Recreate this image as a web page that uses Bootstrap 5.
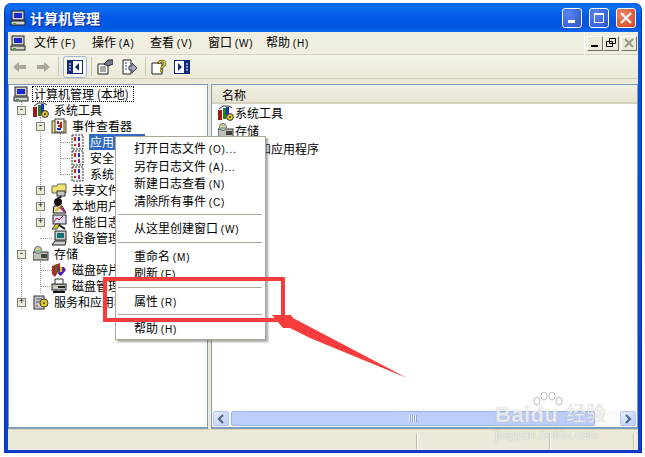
<!DOCTYPE html>
<html lang="zh"><head><meta charset="utf-8"><title>计算机管理</title>
<link href="https://cdn.jsdelivr.net/npm/bootstrap@5.3.0/dist/css/bootstrap.min.css" rel="stylesheet">
<style>
html,body{height:457px;overflow:hidden;background:#fff}
body{font:12px/16px "Noto Sans CJK SC","Liberation Sans",sans-serif;color:#000;position:relative}
.xpwin{margin:3px 0 0 4px;width:638px;height:450px;background:linear-gradient(#0a5ae6,#0053e1 60px,#0b3fd0);border-radius:7px 7px 0 0;padding:0 3px 2px;border:solid #0831b8;border-width:0 1px 1px 1px}
.ttl{height:29px;background:linear-gradient(#0a62e8,#0c6ff0 4px,#0058e8 14px,#0256e0 24px,#0a66ee);margin:0 -3px;padding:0 5px 0 5px;border-radius:7px 7px 0 0;color:#fff;font-size:14px;font-weight:700;line-height:18px;text-shadow:1px 1px #0a2f9e;gap:4px}
.capbtn{width:20px;height:20px;border:1px solid #fff;border-radius:3px;background:radial-gradient(circle at 30% 30%,#5a86ee,#2a52d6);display:flex;align-items:center;justify-content:center;margin-left:3px}
.capbtn.cls{background:radial-gradient(circle at 30% 30%,#e88a6a,#d8401c)}
.cli{background:#ece9d8;height:418px}
.mbar{height:23px;background:#f0eee0;border-bottom:1px solid #d8d4c0;padding-left:2px}
.mitm{margin-left:12px;white-space:nowrap;width:46px}
.mitm.fst{margin-left:8px}
.mitm span,.ctx span{font:10px/16px "Liberation Sans",sans-serif;letter-spacing:.9px}
.mdigrp{border-left:1px solid #fff;height:23px;margin-right:1px;padding-left:2px}
.mdi{width:16px;height:15px;border:1px solid #fff;background:#ece9d8;border-right-color:#716f64;border-bottom-color:#716f64;display:flex;align-items:center;justify-content:center}
.mdi.gap{margin-left:2px}
.tbar{height:24px;background:linear-gradient(#f4f2e8,#ece9d8);border-bottom:1px solid #d0ccb8}
.tsep{width:1px;height:19px;background:#c8c4b0;margin:0 4px}
.tbtn{width:24px;height:22px;display:flex;align-items:center;justify-content:center}
.tbtn.on{border:1px solid #9fb4d0;border-radius:3px;background:#f8f8f2}
.tbtn.w22{width:22px}.tbtn.w18{width:18px}.tbtn.ml3{margin-left:3px}.tbtn.ml5{margin-left:5px}
.panes{height:350px;padding-top:5px}
.lp{width:200px;background:#fff;border:1px solid #7f9db9;border-bottom-width:2px;padding-top:1px;overflow:hidden;position:relative}
.rp{width:427px;margin-left:3px;background:#fff;border:1px solid #7f9db9;border-bottom-width:2px;overflow:hidden}
.rw{height:16px;white-space:nowrap;position:relative;display:flex;align-items:center;z-index:1}
.rw svg{flex:none}
.lv0{padding-left:4px}.lv1{padding-left:6px}.lv2{padding-left:24px}.lv3{padding-left:42px}
.cut{width:106px}
.xp{flex:none;width:9px;height:9px;margin:0 7px 0 2px;border:1px solid #808080;background:#ece9d8;font:9px/7px "Liberation Mono",monospace;text-align:center;color:#000}
.lv2 .xp{margin:0 6px 0 3px}
.slot{flex:0 0 18px}
.vl{position:absolute;border-left:1px dotted #999;width:0}
.vl1{left:12px;top:16px;height:208px}
.vl2{left:31px;top:32px;height:112px}
.vl3{left:51px;top:48px;height:40px}
.vl4{left:31px;top:176px;height:32px}
.hl{position:absolute;border-top:1px dotted #999;height:0;top:8px}
.hl1{left:51px;width:12px}
.hl2{left:31px;width:12px}
.lab{padding:0 1px;line-height:16px;background:#fff;margin-left:4px;overflow:hidden;min-width:0}
.lab.sel{background:#316ac5;color:#fff;flex:0 0 56px}
.lab.foc{outline:1px dotted #000;outline-offset:-1px;margin-left:3px;padding:0 2px;flex:0 0 102px}
.hdr{height:19px;background:linear-gradient(#f2f0e4,#e8e5d4);border-bottom:2px solid #d5d1bc;padding-left:10px;line-height:19px}
.rr{height:18px;padding-left:6px}
.rr .lab{margin-left:0}
.sbar{height:17px;background:#fbfbf8;padding:1px;gap:2px}
.sb{flex:none;width:16px;height:15px;background:linear-gradient(135deg,#e4ebfd,#bccdf8);border:1px solid #b4c6ee;border-radius:2px;display:flex;align-items:center;justify-content:center}
.thm{height:15px;background:#bccdf9;border:1px solid #9db4e8;border-radius:2px;display:flex;align-items:center;justify-content:center}
.trk{flex:0 0 21px}
.grip{width:8px;height:7px;background:repeating-linear-gradient(90deg,#eef3ff 0 1px,#8aa4dc 1px 2px)}
.stat{height:21px;background:#ece9d8;border-top:1px solid #d8d4c0;padding:3px 0 0 409px}
.stat i{display:block;height:16px;border-left:1px solid #fff;box-shadow:-1px 0 #c0bca8}
.st1{width:133px}.st2{width:84px}
.ctx{position:absolute;left:115px;top:136px;width:151px;height:204px;background:#fff;border:1px solid #aca899;box-shadow:2px 2px 2px rgba(80,80,80,.5);padding:3px 2px 0;z-index:3}
.cit{height:17.5px;padding-left:16px;line-height:16px;white-space:nowrap}
.ctx hr{margin:4px 1px 5px 0;border:0;border-top:1px solid #aca899;opacity:1}
.mrk{position:absolute;left:103px;top:277px;width:182px;height:45px;border:4px solid #f63c3c;pointer-events:none;z-index:4}
.arw{position:absolute;left:260px;top:300px;pointer-events:none;z-index:4}
.wm{position:absolute;left:495px;top:392px;width:120px;height:52px;color:rgba(255,255,255,.8);pointer-events:none;white-space:nowrap;text-shadow:0 0 1px rgba(110,110,110,.55);z-index:4}
.wm1{font:700 22px/24px "Liberation Sans",sans-serif;position:absolute;left:0;top:11px;letter-spacing:.4px}
.wm2{font:20px/24px "Noto Sans CJK SC",sans-serif;position:absolute;left:71px;top:9px}
.wm3{font:400 12px/12px "Liberation Sans",sans-serif;letter-spacing:.45px;position:absolute;left:0;top:37px}
.paw{position:absolute;left:36px;top:0}
</style></head><body>
<svg width="0" height="0" class="position-absolute"><defs>
<symbol id="pc" viewBox="0 0 16 16"><rect x="2" y="1" width="12" height="9" fill="#d0d0c8" stroke="#222"/><rect x="4" y="3" width="8" height="5" fill="#1a28c8"/><rect x="1" y="11" width="14" height="4" fill="#d0d0c8" stroke="#222"/><rect x="3" y="13" width="3" height="1" fill="#2a2"/></symbol>
<symbol id="tool" viewBox="0 0 16 16"><rect x="0" y="5" width="4" height="10" fill="#a01818"/><rect x="5" y="3" width="3" height="11" fill="#208020"/><rect x="8" y="2" width="3" height="9" fill="#1c30c0"/><path d="M1 4l4-3h6l3 2" stroke="#333" fill="none"/><circle cx="12" cy="12" r="3.4" fill="#e8c820" stroke="#333"/><circle cx="12" cy="12" r="1" fill="#333"/></symbol>
<symbol id="evt" viewBox="0 0 16 16"><rect x="1" y="3" width="14" height="12" fill="#f0e070" stroke="#444"/><rect x="4" y="1" width="9" height="13" fill="#fff" stroke="#444"/><path d="M7 3v3M7 8h2M10 4v6" stroke="#c02020" stroke-width="2"/><path d="M6 11h4" stroke="#2030c0" stroke-width="2"/></symbol>
<symbol id="log" viewBox="0 0 16 16"><rect x="3" y="1" width="11" height="14" fill="#f4f4f0" stroke="#333" stroke-dasharray="2 1"/><path d="M6 3v4M6 10v2" stroke="#d02020" stroke-width="2"/><path d="M10 3v4" stroke="#2030c0" stroke-width="2"/><path d="M10 9v4" stroke="#a020a0" stroke-width="2"/></symbol>
<symbol id="fld" viewBox="0 0 16 16"><path d="M1 4h5l1-2h8v9H1z" fill="#f0e070" stroke="#666"/><rect x="6" y="9" width="8" height="5" fill="#c0c8c0" stroke="#333"/><path d="M10 14v2H6" stroke="#222"/></symbol>
<symbol id="usr" viewBox="0 0 16 16"><circle cx="7" cy="4" r="4" fill="#111"/><path d="M2 15l1-7h8l4 7z" fill="#e8e8e0" stroke="#111"/><path d="M4 13l6-5" stroke="#e0c020" stroke-width="2.4"/><path d="M9 9l5 5" stroke="#b02080" stroke-width="2"/></symbol>
<symbol id="perf" viewBox="0 0 16 16"><rect x="2" y="1" width="13" height="9" fill="#d8d8f0" stroke="#222"/><path d="M3 8l3-4 2 2 4-4" stroke="#c02020" fill="none"/><path d="M1 15l4-5h4l-3 5z" fill="#e0c020" stroke="#444"/><path d="M8 11l6 4" stroke="#111" stroke-width="2"/></symbol>
<symbol id="dev" viewBox="0 0 16 16"><rect x="4" y="1" width="11" height="9" fill="#d0d0c8" stroke="#222"/><rect x="6" y="3" width="7" height="5" fill="#107080"/><path d="M1 15l3-4h11l-1 4z" fill="#d0d0c8" stroke="#222"/></symbol>
<symbol id="sto" viewBox="0 0 16 16"><rect x="0" y="6" width="15" height="8" fill="#c0c0b8" stroke="#333"/><rect x="8" y="8" width="6" height="4" fill="#444"/><circle cx="5" cy="4" r="3.5" fill="#d0d0d8" stroke="#666"/><path d="M3 2l2 2 2-2z" fill="#e0d020"/><path d="M3 5h4" stroke="#20b040"/></symbol>
<symbol id="frg" viewBox="0 0 16 16"><path d="M1 4l8-3v6l-5 8-3-3z" fill="#c02020"/><path d="M4 3l2-1v9l-2 1z" fill="#208020"/><path d="M8 5h5l2 3-5 6-3-2z" fill="#5020b0"/><path d="M9 5h2v5H9z" fill="#e0c020"/></symbol>
<symbol id="dsk" viewBox="0 0 16 16"><rect x="1" y="6" width="14" height="6" fill="#c8c8c0" stroke="#222"/><rect x="7" y="8" width="7" height="2" fill="#222"/><path d="M4 1h8v5H4z" fill="#fff" stroke="#333"/><path d="M2 14h12" stroke="#111" stroke-width="2"/><path d="M5 12v2M11 12v2" stroke="#111"/></symbol>
<symbol id="svc" viewBox="0 0 16 16"><rect x="1" y="2" width="10" height="13" fill="#c8c8d0" stroke="#333"/><path d="M3 5h6M3 8h6" stroke="#555"/><circle cx="11" cy="9" r="4" fill="#e8c820" stroke="#444"/><circle cx="11" cy="9" r="1" fill="#444"/><path d="M3 12h2" stroke="#d02020"/></symbol>
</defs></svg>

<div class="xpwin">
  <div class="ttl d-flex align-items-center">
    <svg width="16" height="16"><use href="#pc"/></svg>
    <span class="flex-grow-1">计算机管理</span>
    <span class="capbtn"><svg width="12" height="12"><rect x="2" y="8" width="7" height="3" fill="#fff"/></svg></span>
    <span class="capbtn"><svg width="12" height="12"><rect x="1.5" y="1.5" width="9" height="9" fill="none" stroke="#fff"/><rect x="1" y="1" width="10" height="2" fill="#fff"/></svg></span>
    <span class="capbtn cls"><svg width="12" height="12"><path d="M1 1l10 10M11 1L1 11" stroke="#fff" stroke-width="2.2"/></svg></span>
  </div>
  <div class="cli">
    <div class="mbar d-flex align-items-center">
      <svg width="16" height="16"><use href="#pc"/></svg>
      <span class="mitm fst">文件 <span>(F)</span></span><span class="mitm">操作 <span>(A)</span></span><span class="mitm">查看 <span>(V)</span></span><span class="mitm">窗口 <span>(W)</span></span><span class="mitm">帮助 <span>(H)</span></span>
      <span class="ms-auto d-flex align-items-center mdigrp">
        <span class="mdi"><svg width="10" height="10"><rect x="1" y="7" width="7" height="2"/></svg></span>
        <span class="mdi"><svg width="10" height="10"><path d="M3.5 .5h6v5h-6zM.5 3.5h6v5h-6z" fill="#ece9d8" stroke="#000"/></svg></span>
        <span class="mdi gap"><svg width="10" height="10"><path d="M1 1l8 8M9 1L1 9" stroke="#9a9888" stroke-width="2"/></svg></span>
      </span>
    </div>
    <div class="tbar d-flex align-items-center">
      <span class="tbtn ms-0"><svg width="14" height="12"><path d="M0 6l6-5v3h7v4H6v3z" fill="#aaa89a"/></svg></span>
      <span class="tbtn w22"><svg width="14" height="12"><path d="M14 6L8 1v3H1v4h7v3z" fill="#aaa89a"/></svg></span>
      <span class="tsep"></span>
      <span class="tbtn on"><svg width="16" height="14"><rect x=".5" y=".5" width="15" height="13" fill="#fff" stroke="#102a78"/><rect x="0" y="0" width="6" height="14" fill="#102a78"/><path d="M2 4h2M2 7h2M2 10h2" stroke="#fff"/><path d="M12 3v8L8 7z" fill="#102a78"/></svg></span>
      <span class="tsep"></span>
      <span class="tbtn w18"><svg width="16" height="16"><path d="M1 5h10v10H1z" fill="#fff" stroke="#222"/><path d="M3 8h6M3 10h6M3 12h6" stroke="#555"/><path d="M7 5l4-4h5v4l-5 2z" fill="#708098" stroke="#222"/></svg></span>
      <span class="tbtn ml3"><svg width="16" height="16"><path d="M2 1h8v14H2z" fill="#fff" stroke="#222"/><path d="M4 4h2M4 7h2M4 10h2" stroke="#2040b0"/><path d="M8 7h3V4l5 5-5 5v-3H8z" fill="#a0a8b8" stroke="#445"/></svg></span>
      <span class="tsep"></span>
      <span class="tbtn w18"><svg width="16" height="16"><path d="M1 4h10v11H1z" fill="#fff" stroke="#222"/><text x="6" y="13" font-family="Liberation Sans" font-size="16" font-weight="700" fill="#e8d020" stroke="#222" stroke-width=".5">?</text></svg></span>
      <span class="tbtn w18 ml5"><svg width="16" height="14"><rect x=".5" y=".5" width="15" height="13" fill="#fff" stroke="#102a78"/><rect x="10" y="0" width="6" height="14" fill="#102a78"/><path d="M12 4h2M12 7h2M12 10h2" stroke="#fff"/><path d="M4 3v8l4-4z" fill="#102a78"/></svg></span>
    </div>
    <div class="panes d-flex">
      <div class="lp">
        <span class="vl vl1"></span><span class="vl vl2"></span><span class="vl vl3"></span><span class="vl vl4"></span>
        <div class="rw lv0"><svg width="16" height="16"><use href="#pc"/></svg><span class="lab foc">计算机管理 (本地)</span></div>
        <div class="rw lv1"><span class="xp">-</span><svg width="16" height="16"><use href="#tool"/></svg><span class="lab">系统工具</span></div>
        <div class="rw lv2"><span class="xp">-</span><svg width="16" height="16"><use href="#evt"/></svg><span class="lab">事件查看器</span></div>
        <div class="rw lv3"><span class="hl hl1"></span><span class="slot"></span><svg width="16" height="16"><use href="#log"/></svg><span class="lab sel">应用</span></div>
        <div class="rw lv3"><span class="hl hl1"></span><span class="slot"></span><svg width="16" height="16"><use href="#log"/></svg><span class="lab">安全</span></div>
        <div class="rw lv3"><span class="hl hl1"></span><span class="slot"></span><svg width="16" height="16"><use href="#log"/></svg><span class="lab">系统</span></div>
        <div class="rw lv2 cut"><span class="xp">+</span><svg width="16" height="16"><use href="#fld"/></svg><span class="lab">共享文件</span></div>
        <div class="rw lv2 cut"><span class="xp">+</span><svg width="16" height="16"><use href="#usr"/></svg><span class="lab">本地用户</span></div>
        <div class="rw lv2 cut"><span class="xp">+</span><svg width="16" height="16"><use href="#perf"/></svg><span class="lab">性能日志</span></div>
        <div class="rw lv2 cut"><span class="hl hl2"></span><span class="slot"></span><svg width="16" height="16"><use href="#dev"/></svg><span class="lab">设备管理</span></div>
        <div class="rw lv1"><span class="xp">-</span><svg width="16" height="16"><use href="#sto"/></svg><span class="lab">存储</span></div>
        <div class="rw lv2 cut"><span class="hl hl2"></span><span class="slot"></span><svg width="16" height="16"><use href="#frg"/></svg><span class="lab">磁盘碎片</span></div>
        <div class="rw lv2 cut"><span class="hl hl2"></span><span class="slot"></span><svg width="16" height="16"><use href="#dsk"/></svg><span class="lab">磁盘管理</span></div>
        <div class="rw lv1 cut"><span class="xp">+</span><svg width="16" height="16"><use href="#svc"/></svg><span class="lab">服务和应用程</span></div>
      </div>
      <div class="rp d-flex flex-column">
        <div class="hdr">名称</div>
        <div class="rw rr"><svg width="16" height="16"><use href="#tool"/></svg><span class="lab">系统工具</span></div>
        <div class="rw rr"><svg width="16" height="16"><use href="#sto"/></svg><span class="lab">存储</span></div>
        <div class="rw rr"><svg width="16" height="16"><use href="#svc"/></svg><span class="lab">服务和应用程序</span></div>
        <div class="sbar d-flex mt-auto">
          <span class="sb"><svg width="8" height="10"><path d="M6 1L2 5l4 4" fill="none" stroke="#4d6185" stroke-width="2"/></svg></span>
          <span class="thm flex-grow-1"><span class="grip"></span></span>
          <span class="trk"></span>
          <span class="sb"><svg width="8" height="10"><path d="M2 1l4 4-4 4" fill="none" stroke="#4d6185" stroke-width="2"/></svg></span>
        </div>
      </div>
    </div>
    <div class="stat d-flex"><i class="st1"></i><i class="st2"></i><i></i></div>
  </div>
</div>

<div class="ctx">
  <div class="cit">打开日志文件 <span>(O)...</span></div>
  <div class="cit">另存日志文件 <span>(A)...</span></div>
  <div class="cit">新建日志查看 <span>(N)</span></div>
  <div class="cit">清除所有事件 <span>(C)</span></div>
  <hr>
  <div class="cit">从这里创建窗口 <span>(W)</span></div>
  <hr>
  <div class="cit">重命名 <span>(M)</span></div>
  <div class="cit">刷新 <span>(F)</span></div>
  <hr>
  <div class="cit">属性 <span>(R)</span></div>
  <hr>
  <div class="cit">帮助 <span>(H)</span></div>
</div>
<div class="mrk"></div>
<svg class="arw" width="160" height="90"><path d="M12 15L31 15 33 18 147 78 50 38 30 28 23 28z" fill="#f63c3c"/></svg>
<div class="wm">
  <svg class="paw" width="32" height="16"><g fill="rgba(255,255,255,.8)" stroke="rgba(110,110,110,.45)"><ellipse cx="6" cy="9" rx="3" ry="4"/><ellipse cx="13" cy="4" rx="3" ry="4"/><ellipse cx="21" cy="4" rx="3" ry="4"/><ellipse cx="28" cy="9" rx="3" ry="4"/></g></svg>
  <span class="wm1">Baidu</span><span class="wm2">经验</span><span class="wm3">jingyan.baidu.com</span>
</div>
</body></html>
